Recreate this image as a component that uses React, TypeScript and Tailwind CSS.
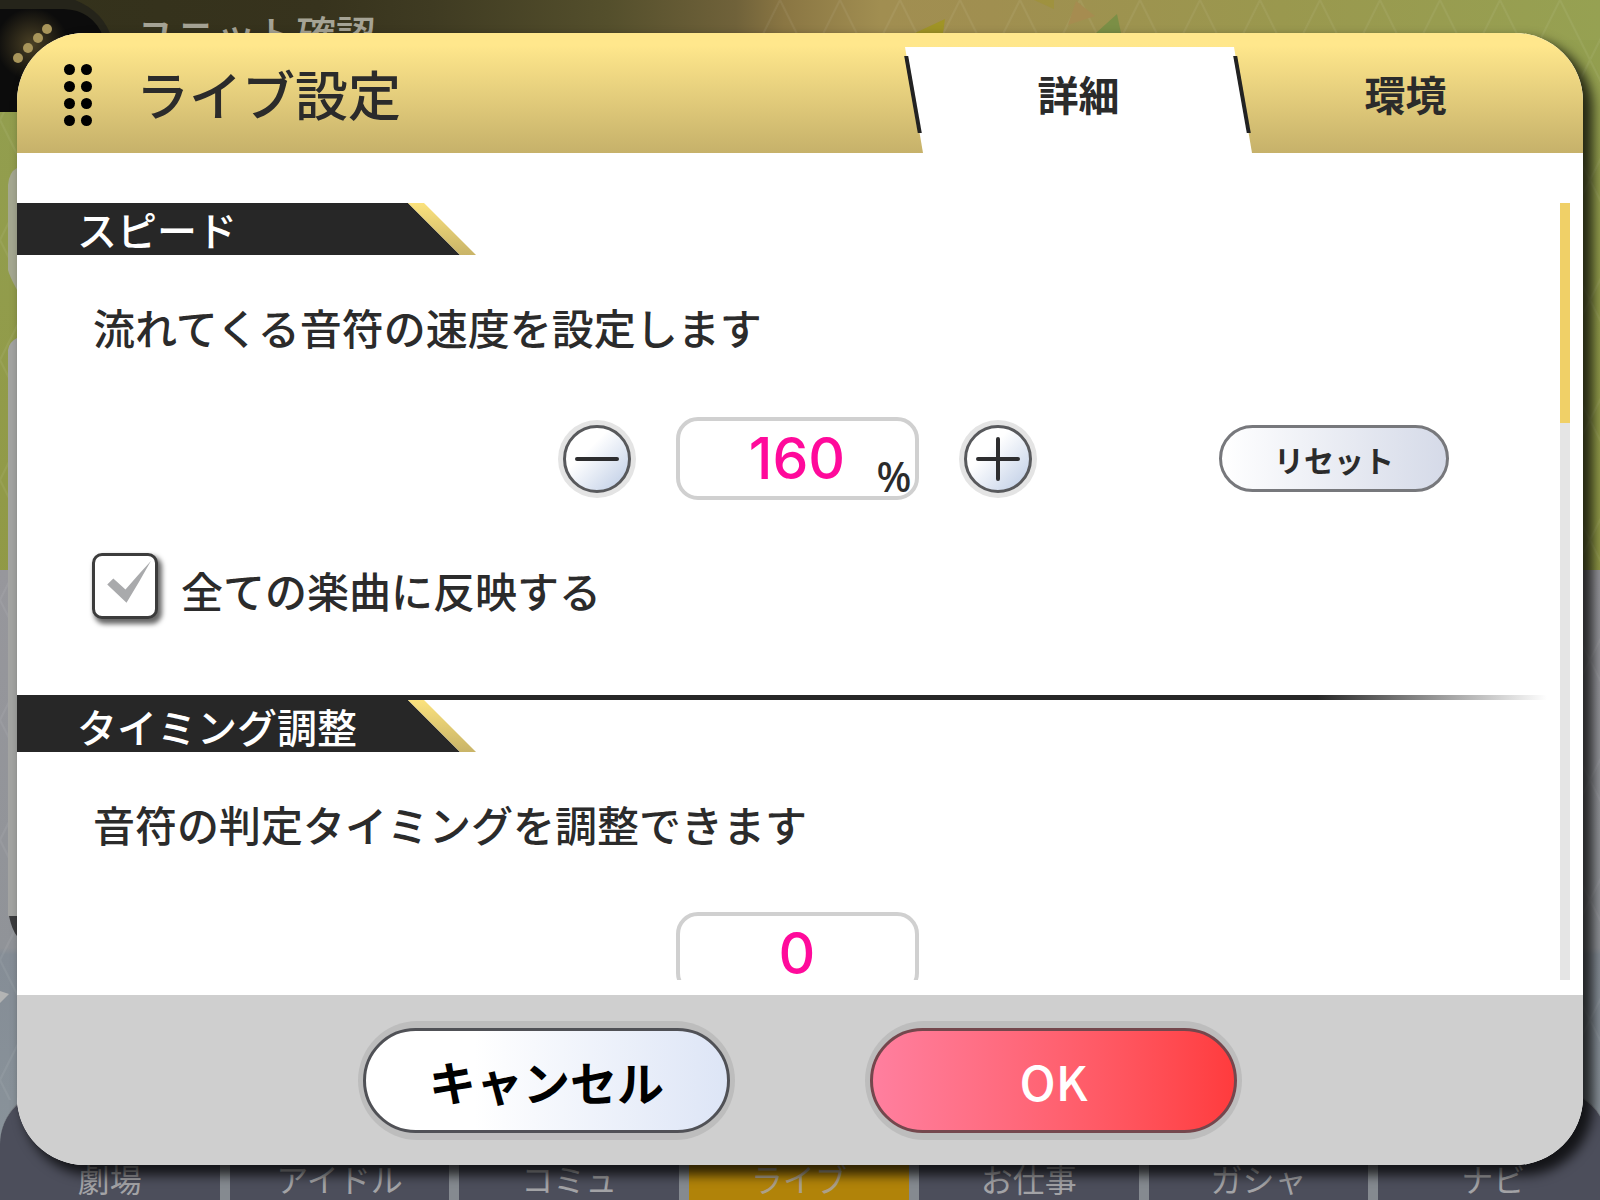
import { useState, type ReactNode } from 'react';

const navItems = ['劇場', 'アイドル', 'コミュ', 'ライブ', 'お仕事', 'ガシャ', 'ナビ'];

function Backdrop() {
  return (
    <div className="absolute inset-0 -z-10 overflow-hidden" aria-hidden="true">
      <svg className="absolute inset-0 h-full w-full" viewBox="0 0 1600 1200" preserveAspectRatio="none">
        <defs>
          <linearGradient id="sky" x1="0" x2="1" y1="0" y2="0">
            <stop offset="0" stopColor="#33311b" />
            <stop offset="0.2" stopColor="#37331d" />
            <stop offset="0.27" stopColor="#3f3b22" />
            <stop offset="0.38" stopColor="#544f2c" />
            <stop offset="0.46" stopColor="#70623a" />
            <stop offset="0.49" stopColor="#8a7643" />
            <stop offset="0.55" stopColor="#a18e51" />
            <stop offset="0.62" stopColor="#a08f50" />
            <stop offset="0.8" stopColor="#9a984e" />
            <stop offset="1" stopColor="#96a152" />
          </linearGradient>
          <linearGradient id="meadow" x1="0" x2="0" y1="0" y2="1">
            <stop offset="0" stopColor="#939f50" />
            <stop offset="1" stopColor="#8e933c" />
          </linearGradient>
          <linearGradient id="floor" x1="0" x2="0" y1="0" y2="1">
            <stop offset="0" stopColor="#97979c" />
            <stop offset="0.6" stopColor="#909398" />
            <stop offset="0.61" stopColor="#858d96" />
            <stop offset="1" stopColor="#8a949b" />
          </linearGradient>
          <pattern id="lattice" width="120" height="120" patternUnits="userSpaceOnUse">
            <path d="M0 120 60 0 120 120M0 0 60 120 120 0" fill="none" stroke="#fff" strokeOpacity="0.06" strokeWidth="2" />
          </pattern>
          <radialGradient id="glow">
            <stop offset="0" stopColor="#a8904a" stopOpacity="0.4" />
            <stop offset="1" stopColor="#a8904a" stopOpacity="0" />
          </radialGradient>
        </defs>
        <path d="M0 0H1600V1200H0Z" fill="url(#meadow)" />
        <path d="M0 0H1600V40H0Z" fill="url(#sky)" />
        <path d="M0 570H1600V1200H0Z" fill="url(#floor)" />
        <path d="M760 0H1600V1200H760ZM0 112H20V1100H0Z" fill="url(#lattice)" />
        <path d="M915 33 945 19 943 33Z" fill="#a09426" />
        <path d="M1034 0H1054V9Z" fill="#a09426" fillOpacity="0.4" />
        <path d="M1076 1 1095 16 1068 25Z" fill="#a68c50" />
        <path d="M1096 33 1117 14 1121 33Z" fill="#7b8f46" />
        <path d="M8 185Q9 172 17 168V290Q9 275 8 270Z" fill="#a5a891" />
        <path d="M8 350Q9 342 17 338V916H8Z" fill="#a3a4a2" />
        <path d="M9 916H17V936Q12 930 9 916Z" fill="#3c3c3e" />
        <path d="M0 991 9 994 0 1003Z" fill="#b3b4b4" />
        <path d="M0 0H75Q105 12 112 40H0Z" fill="#25241a" />
        <path d="M0 9H64Q92 10 103 36V112H0Z" fill="#0c0c0c" />
        <circle cx="32" cy="44" r="36" fill="url(#glow)" />
        <g fill="#a8955a">
          <circle cx="18" cy="58" r="5" />
          <circle cx="28" cy="48" r="5" />
          <circle cx="38" cy="38" r="5" />
          <circle cx="47" cy="29" r="5" />
        </g>
      </svg>
      <p className="absolute left-[136px] top-[13px] text-[40px] leading-none font-medium text-[#a5a395]">ユニット確認</p>
      <div className="absolute -right-2 bottom-0 left-0 grid h-[112px] grid-cols-7 items-end overflow-hidden rounded-t-[56px] border-t-2 border-[#7c8085] bg-[#4c4e5b]">
        {navItems.map((item) => (
          <div
            key={item}
            className={
              item === 'ライブ'
                ? 'flex h-full items-end justify-center border-r-[10px] border-[#858a90] bg-[#b18309] pb-1 text-[32px] leading-[36px] text-[#aca089]'
                : 'flex h-full items-end justify-center border-r-[10px] border-[#858a90] pb-1 text-[32px] leading-[36px] text-[#a3a3a6] last:border-r-0'
            }
          >
            {item}
          </div>
        ))}
      </div>
    </div>
  );
}

function SectionTitle({ children }: { children: ReactNode }) {
  return (
    <div className="flex h-[52px]">
      <h2 className="w-[443px] bg-[#272727] pl-[60px] text-[40px] leading-[52px] font-medium text-white [clip-path:polygon(0_0,391px_0,100%_100%,0_100%)]">
        {children}
      </h2>
      <div className="-ml-[52px] w-[68px] bg-linear-to-b from-[#fbe27d] to-[#c9b468] [clip-path:polygon(0_0,16px_0,100%_100%,52px_100%)]" />
    </div>
  );
}

function StepButton({ label, onClick, plus }: { label: string; onClick: () => void; plus?: boolean }) {
  return (
    <button
      type="button"
      aria-label={label}
      onClick={onClick}
      className="rounded-full bg-[#e4e4e4] p-[5px]"
    >
      <span className="flex size-[68px] items-center justify-center rounded-full border-[3px] border-[#58595c] bg-linear-to-br from-white from-35% to-[#bccbe4]">
        <svg width="44" height="44" viewBox="0 0 44 44" stroke="#2d2d2f" strokeWidth="4" strokeLinecap="round">
          <path d={plus ? 'M2 22H42M22 2V42' : 'M2 22H42'} />
        </svg>
      </span>
    </button>
  );
}

export default function App() {
  const [speed, setSpeed] = useState(160);
  const [timing, setTiming] = useState('0');
  const [applyAll, setApplyAll] = useState(true);

  return (
    <div className="relative isolate flex h-screen flex-col px-[17px] pt-[33px] pb-[35px] font-['Noto_Sans_CJK_JP',sans-serif] text-[#2b2b2b]">
      <Backdrop />

      <main className="flex min-h-0 flex-1 flex-col overflow-hidden rounded-[68px] bg-white shadow-[8px_8px_12px_2px_rgba(0,0,0,0.75)]">
        {/* Header with tabs */}
        <header className="flex h-[120px] shrink-0 items-center bg-linear-to-b from-[#ffe78c] from-10% to-[#c6b16a] pl-[47px]">
          <div className="grid grid-cols-2 gap-[6px] pt-1" aria-hidden="true">
            {Array.from({ length: 8 }, (_, i) => (
              <span key={i} className="size-[11px] rounded-full bg-black" />
            ))}
          </div>
          <h1 className="ml-[44px] text-[53px] leading-none font-medium">ライブ設定</h1>

          <div role="tablist" className="ml-auto flex self-end text-[41px] font-bold">
            <div className="relative">
              <button
                type="button"
                role="tab"
                aria-selected="true"
                className="h-[106px] w-[347px] bg-white pb-3 [clip-path:polygon(0_0,329px_0,100%_100%,18px_100%)]"
              >
                詳細
              </button>
              <span className="absolute top-[9px] left-[6px] h-[77px] w-1 skew-x-[10deg] bg-[#222]" />
              <span className="absolute top-[9px] right-[8px] h-[77px] w-1 skew-x-[10deg] bg-[#222]" />
            </div>
            <button type="button" role="tab" aria-selected="false" className="h-[106px] w-[331px] pr-6 pb-3">
              環境
            </button>
          </div>
        </header>

        {/* Scrollable settings */}
        <div className="flex min-h-0 flex-1 pt-[50px] pr-[13px] pb-[15px]">
          <div className="min-w-0 flex-1 overflow-hidden">
            <section className="pb-[76px]">
              <SectionTitle>スピード</SectionTitle>
              <p className="mt-[42px] pl-[76px] text-[42px] leading-[60px] font-medium">流れてくる音符の速度を設定します</p>

              <div className="mt-[60px] grid grid-cols-[1fr_auto_1fr] items-center pl-[17px]">
                <div className="col-start-2 flex items-center gap-10">
                  <StepButton label="速度を下げる" onClick={() => setSpeed(speed - 5)} />
                  <div className="relative">
                    <input
                      aria-label="スピード"
                      value={speed}
                      onChange={(e) => setSpeed(Number(e.target.value) || 0)}
                      className="block h-[83px] w-[243px] rounded-[22px] border-4 border-[#d0d0d0] bg-white text-center font-[Inter,sans-serif] text-[57px] font-medium text-[#ff0a9b]"
                    />
                    <span className="absolute right-[7px] bottom-[9px] font-['Noto_Sans',sans-serif] text-[41px] leading-[30px] font-medium">%</span>
                  </div>
                  <StepButton label="速度を上げる" onClick={() => setSpeed(speed + 5)} plus />
                </div>
                <button
                  type="button"
                  onClick={() => setSpeed(160)}
                  className="mr-[111px] h-[67px] w-[230px] justify-self-end rounded-full border-[3px] border-[#77787c] bg-linear-to-r from-white to-[#d5dae8] text-[30px] leading-none font-bold"
                >
                  リセット
                </button>
              </div>

              <label className="mt-[53px] ml-[75px] flex w-fit items-center gap-[23px]">
                <span className="relative size-[66px]">
                  <input
                    type="checkbox"
                    checked={applyAll}
                    onChange={(e) => setApplyAll(e.target.checked)}
                    className="block size-full appearance-none rounded-[10px] border-[3px] border-[#3c3c3c] bg-white shadow-[3px_4px_5px_1px_rgba(0,0,0,0.6)]"
                  />
                  {applyAll && (
                    <svg className="pointer-events-none absolute inset-0" viewBox="0 0 65 65">
                      <path d="M15 31 21 25 33 36Q46 21 58 8Q47 28 34 49Z" fill="#a9aaac" />
                    </svg>
                  )}
                </span>
                <span className="pt-2 text-[42px] leading-none font-medium">全ての楽曲に反映する</span>
              </label>
            </section>

            <section>
              <div className="mr-[13px] h-[5px] bg-linear-to-r from-[#272727] from-85% to-transparent" />
              <SectionTitle>タイミング調整</SectionTitle>
              <p className="mt-[42px] pl-[76px] text-[42px] leading-[60px] font-medium">音符の判定タイミングを調整できます</p>
              <div className="mt-[58px] flex justify-center pl-[17px]">
                <input
                  aria-label="タイミング調整"
                  value={timing}
                  onChange={(e) => setTiming(e.target.value)}
                  className="block h-[83px] w-[243px] rounded-[22px] border-4 border-[#d0d0d0] bg-white text-center font-[Inter,sans-serif] text-[57px] font-medium text-[#ff0a9b]"
                />
              </div>
            </section>
          </div>
          <div className="w-[10px] bg-[#e5e5e5]">
            <div className="h-[220px] bg-[#f0d067]" />
          </div>
        </div>

        <footer className="flex h-[170px] shrink-0 items-center justify-center gap-[130px] bg-[#cfcfcf]">
          <button type="button" className="rounded-full bg-[#bdbdbd] px-[5px] py-[7px]">
            <span className="flex h-[105px] w-[367px] items-center justify-center rounded-full border-[3px] border-[#505156] bg-linear-to-r from-white from-30% to-[#dde5f6] text-[47px] leading-none font-bold text-black">
              キャンセル
            </span>
          </button>
          <button type="button" className="rounded-full bg-[#bdbdbd] px-[5px] py-[7px]">
            <span className="flex h-[105px] w-[367px] items-center justify-center rounded-full border-[3px] border-[#74474d] bg-linear-to-r from-[#ff7f9f] to-[#ff3b3d] text-[48px] leading-none font-medium text-white">
              OK
            </span>
          </button>
        </footer>
      </main>
    </div>
  );
}
